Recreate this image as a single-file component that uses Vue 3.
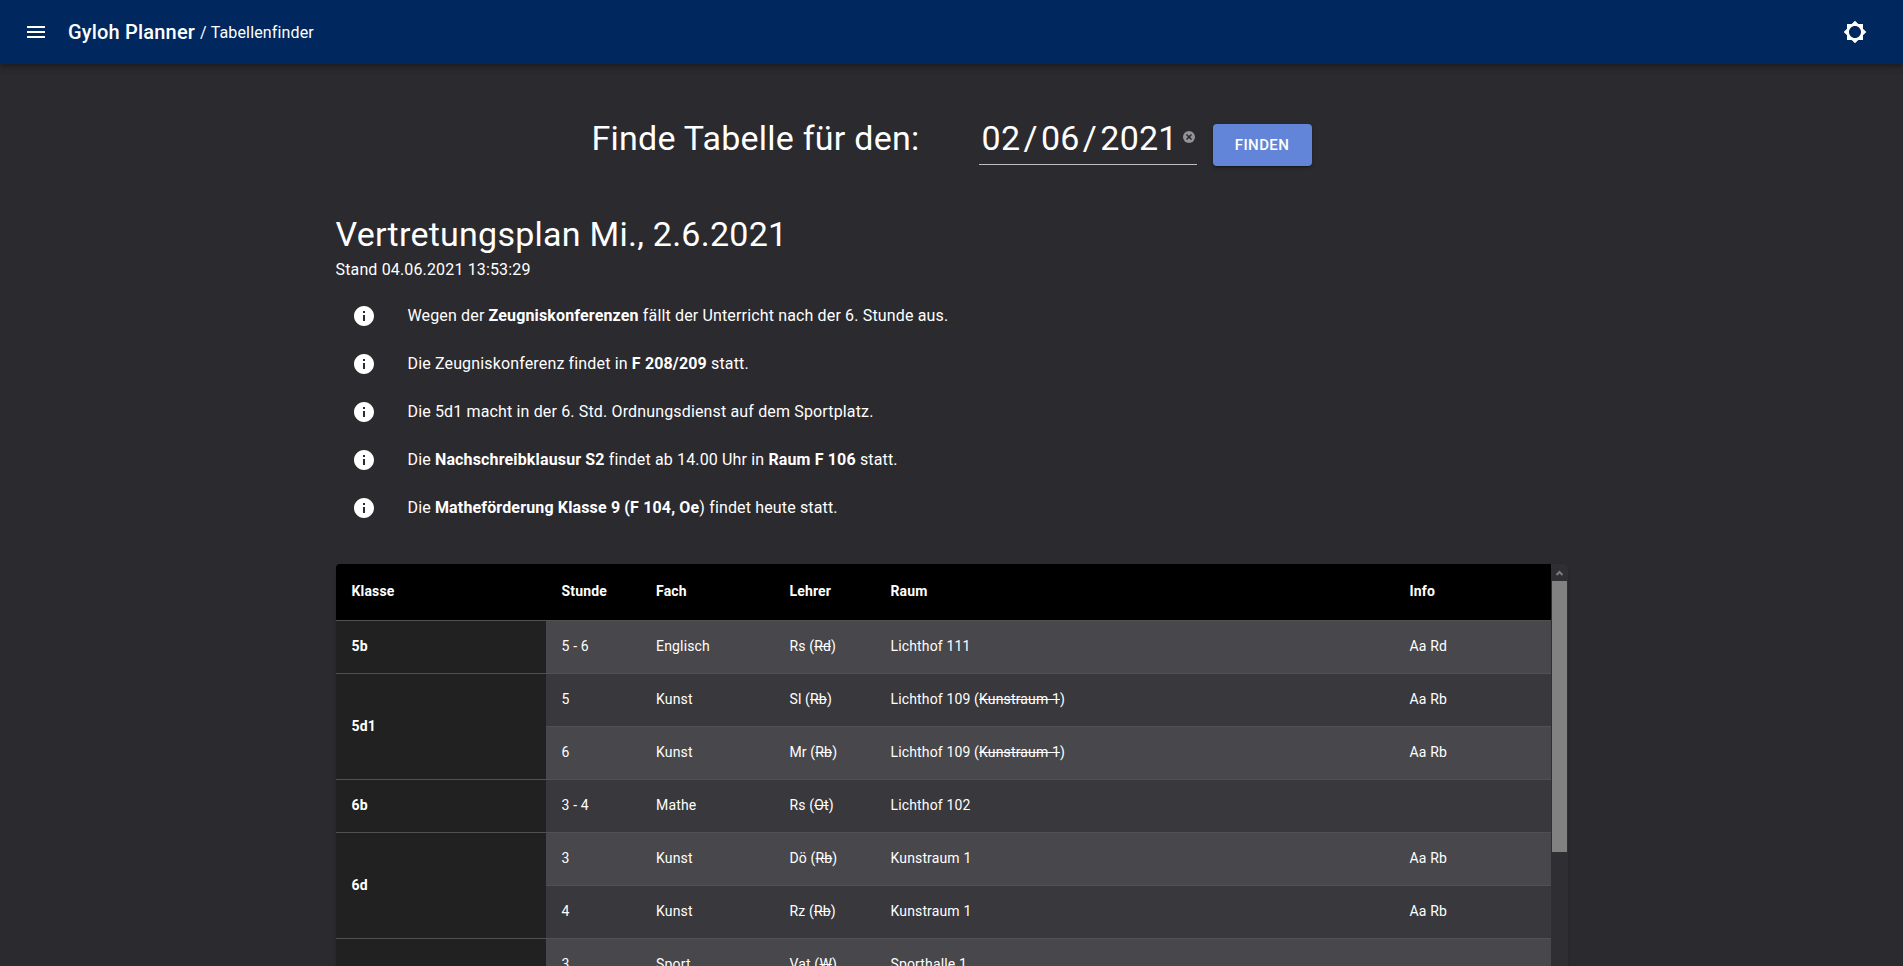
<script setup>
const notices = [
  [{ t: 'Wegen der ' }, { t: 'Zeugniskonferenzen', b: true }, { t: ' fällt der Unterricht nach der 6. Stunde aus.' }],
  [{ t: 'Die Zeugniskonferenz findet in ' }, { t: 'F 208/209', b: true }, { t: ' statt.' }],
  [{ t: 'Die 5d1 macht in der 6. Std. Ordnungsdienst auf dem Sportplatz.' }],
  [{ t: 'Die ' }, { t: 'Nachschreibklausur S2', b: true }, { t: ' findet ab 14.00 Uhr in ' }, { t: 'Raum F 106', b: true }, { t: ' statt.' }],
  [{ t: 'Die ' }, { t: 'Matheförderung Klasse 9 (F 104, Oe', b: true }, { t: ') findet heute statt.' }],
]

const columns = ['Klasse', 'Stunde', 'Fach', 'Lehrer', 'Raum', 'Info']

const rows = [
  { klasse: '5b', span: 1, stunde: '5 - 6', fach: 'Englisch', lehrer: 'Rs', statt: 'Rd', raum: 'Lichthof 111', info: 'Aa Rd' },
  { klasse: '5d1', span: 2, stunde: '5', fach: 'Kunst', lehrer: 'Sl', statt: 'Rb', raum: 'Lichthof 109', alt: 'Kunstraum 1', info: 'Aa Rb' },
  { stunde: '6', fach: 'Kunst', lehrer: 'Mr', statt: 'Rb', raum: 'Lichthof 109', alt: 'Kunstraum 1', info: 'Aa Rb' },
  { klasse: '6b', span: 1, stunde: '3 - 4', fach: 'Mathe', lehrer: 'Rs', statt: 'Ot', raum: 'Lichthof 102', info: '' },
  { klasse: '6d', span: 2, stunde: '3', fach: 'Kunst', lehrer: 'Dö', statt: 'Rb', raum: 'Kunstraum 1', info: 'Aa Rb' },
  { stunde: '4', fach: 'Kunst', lehrer: 'Rz', statt: 'Rb', raum: 'Kunstraum 1', info: 'Aa Rb' },
  { klasse: '', span: 1, stunde: '3', fach: 'Sport', lehrer: 'Vat', statt: 'W', raum: 'Sporthalle 1', info: '' },
]
</script>

<template>
  <div class="page">
    <header class="bar">
      <svg class="icon" viewBox="0 0 24 24"><path d="M3 18h18v-2H3v2zm0-5h18v-2H3v2zm0-7v2h18V6H3z" /></svg>
      <div class="crumbs"><span class="brand">Gyloh Planner</span><span class="section">/ Tabellenfinder</span></div>
      <svg class="icon" viewBox="0 0 24 24"><path d="M20 15.31L23.31 12 20 8.69V4h-4.69L12 .69 8.69 4H4v4.69L.69 12 4 15.31V20h4.69L12 23.31 15.31 20H20v-4.69zM12 18c-3.31 0-6-2.69-6-6s2.69-6 6-6 6 2.69 6 6-2.69 6-6 6z" /></svg>
    </header>

    <main class="container">
      <form class="finder" @submit.prevent>
        <h4 class="headline">Finde Tabelle für den:</h4>
        <div class="date">
          <span>02</span><span class="slash">/</span><span>06</span><span class="slash">/</span><span>2021</span>
          <svg class="clear" viewBox="0 0 12 12">
            <circle cx="6" cy="6" r="6" fill="#949496" />
            <path d="M3.5 3.5l5 5M8.5 3.5l-5 5" stroke="#2b2a2f" stroke-width="1.5" />
          </svg>
        </div>
        <button class="find">Finden</button>
      </form>

      <h4 class="headline">Vertretungsplan Mi., 2.6.2021</h4>
      <p class="stand">Stand 04.06.2021 13:53:29</p>

      <ul class="notices">
        <li v-for="(n, i) in notices" :key="i">
          <svg class="icon" viewBox="0 0 24 24"><path d="M12 2C6.48 2 2 6.48 2 12s4.48 10 10 10 10-4.48 10-10S17.52 2 12 2zm1 15h-2v-6h2v6zm0-8h-2V7h2v2z" /></svg>
          <span><template v-for="(p, j) in n" :key="j"><b v-if="p.b">{{ p.t }}</b><template v-else>{{ p.t }}</template></template></span>
        </li>
      </ul>

      <div class="paper">
        <table>
          <colgroup>
            <col class="c1" /><col class="c2" /><col class="c3" /><col class="c4" /><col class="c5" /><col />
          </colgroup>
          <thead>
            <tr><th v-for="c in columns" :key="c">{{ c }}</th></tr>
          </thead>
          <tbody>
            <tr v-for="(r, i) in rows" :key="i">
              <td v-if="r.span" class="klasse" :rowspan="r.span">{{ r.klasse }}</td>
              <td>{{ r.stunde }}</td>
              <td>{{ r.fach }}</td>
              <td>{{ r.lehrer }} (<s>{{ r.statt }}</s>)</td>
              <td>{{ r.raum }}<template v-if="r.alt"> (<s>{{ r.alt }}</s>)</template></td>
              <td>{{ r.info }}</td>
            </tr>
          </tbody>
        </table>
        <div class="scrollbar">
          <svg class="arrow" viewBox="0 0 15 17"><path d="M4.5 11L7.5 8L10.5 11" fill="none" stroke="#7c7c7e" stroke-width="2" /></svg>
          <div class="thumb"></div>
        </div>
      </div>
    </main>
  </div>
</template>

<style>
body {
  margin: 0;
  background: #2b2a2f;
}
</style>

<style scoped>
.page {
  height: 100vh;
  overflow: hidden;
  background: #2b2a2f;
  color: #fff;
  font: 400 16px/24px Roboto, sans-serif;
  letter-spacing: 0.15px;
}
.icon {
  width: 24px;
  height: 24px;
  fill: #fff;
  flex: none;
}
.bar {
  position: relative;
  display: flex;
  align-items: center;
  height: 64px;
  padding: 0 36px 0 24px;
  box-sizing: border-box;
  background: #00275e;
  box-shadow: 0 2px 4px -1px rgba(0, 0, 0, 0.2), 0 4px 5px rgba(0, 0, 0, 0.14), 0 1px 10px rgba(0, 0, 0, 0.12);
}
.crumbs {
  display: flex;
  align-items: flex-start;
  flex: 1;
  height: 32px;
  margin-left: 20px;
  line-height: 32px;
}
.brand {
  font-size: 20px;
  font-weight: 500;
  letter-spacing: 0.19px;
}
.section {
  margin: 1px 0 0 5px;
}
.container {
  width: 1232px;
  margin: 0 auto;
  padding-top: 53px;
}
.headline {
  margin: 0;
  font-size: 34px;
  font-weight: 400;
  line-height: 42px;
  letter-spacing: 0.25px;
}
.finder {
  display: flex;
  justify-content: center;
  align-items: flex-start;
  height: 96px;
}
.date {
  display: flex;
  width: 218px;
  height: 48px;
  box-sizing: border-box;
  margin-left: 59px;
  padding-left: 3px;
  border-bottom: 1px solid #bfbfc0;
  font-size: 34px;
  line-height: 42px;
  letter-spacing: 0.25px;
}
.slash {
  padding: 0 3.2px;
}
.clear {
  width: 12px;
  height: 12px;
  margin: 14px 2px 0 auto;
}
.find {
  width: 99px;
  height: 42px;
  margin: 7px 0 0 16px;
  padding: 0;
  border: 0;
  border-radius: 4px;
  background: #6285d9;
  color: #fff;
  font: 500 15px/26px Roboto, sans-serif;
  letter-spacing: 0.4px;
  text-transform: uppercase;
  box-shadow: 0 3px 1px -2px rgba(0, 0, 0, 0.2), 0 2px 2px rgba(0, 0, 0, 0.14), 0 1px 5px rgba(0, 0, 0, 0.12);
}
.stand {
  margin: 3px 0 0;
}
.notices {
  margin: 10px 0 32px;
  padding: 0;
  list-style: none;
}
.notices li {
  display: flex;
  align-items: center;
  gap: 32px;
  height: 48px;
  padding-left: 16px;
}
b {
  font-weight: 700;
}
.paper {
  display: flex;
  height: 500px;
  overflow: hidden;
  border-radius: 4px;
  background: #2f2e33;
  box-shadow: 0 2px 1px -1px rgba(0, 0, 0, 0.2), 0 1px 1px rgba(0, 0, 0, 0.14), 0 1px 3px rgba(0, 0, 0, 0.12);
}
table {
  width: 1215px;
  align-self: flex-start;
  table-layout: fixed;
  border-collapse: separate;
  border-spacing: 0;
  font-size: 14px;
  line-height: 20px;
}
.c1 { width: 210px; }
.c2 { width: 94.6px; }
.c3 { width: 133.4px; }
.c4 { width: 101px; }
.c5 { width: 519px; }
th,
td {
  padding: 15px 16px 17px;
  border-bottom: 1px solid #515151;
  text-align: left;
}
th {
  line-height: 24px;
  font-weight: 700;
  background: #000;
}
td {
  background: #39383c;
}
tr:nth-child(odd) td {
  background: #48474b;
}
tbody td.klasse,
tbody tr:nth-child(odd) td.klasse {
  background: #212121;
  font-weight: 700;
}
.scrollbar {
  display: flex;
  flex-direction: column;
  width: 15px;
  padding: 0 1px;
}
.arrow {
  width: 15px;
  height: 17px;
}
.thumb {
  height: 271px;
  background: #818182;
}
</style>
